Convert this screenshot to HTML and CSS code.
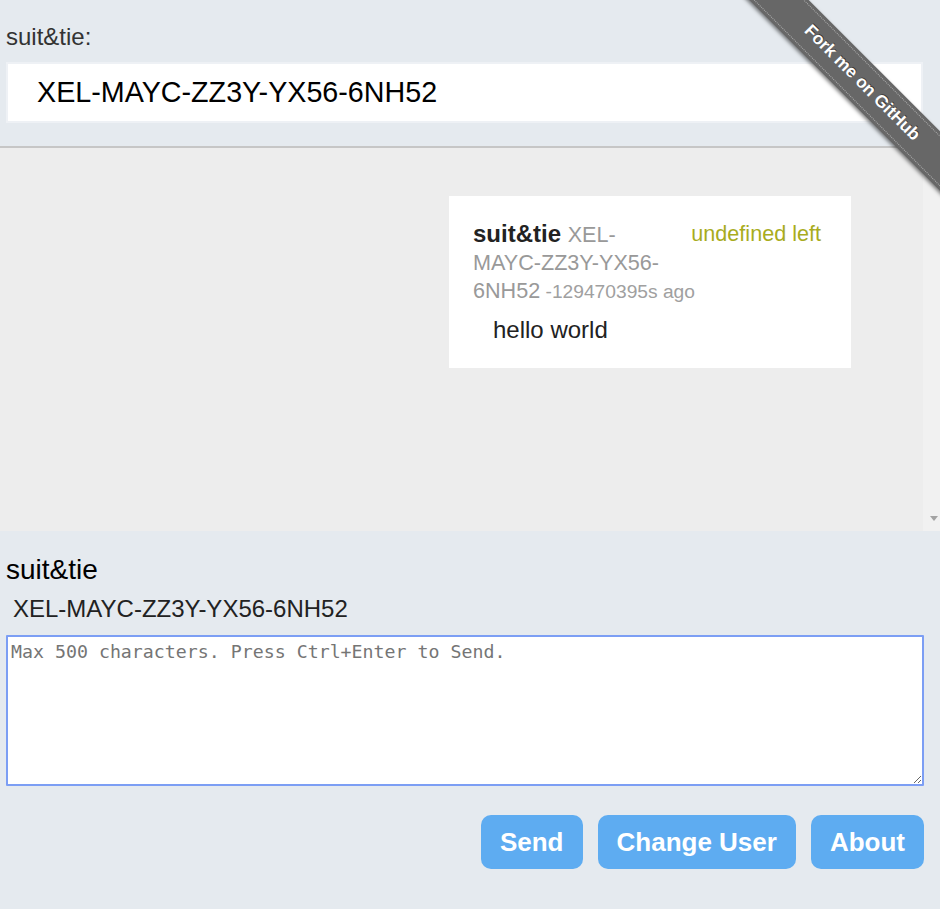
FILE: index.html
```html
<!DOCTYPE html>
<html lang="en">
<head>
<meta charset="utf-8">
<title>suit&amp;tie chat</title>
<link rel="stylesheet" href="styles.css">
</head>
<body>
<div class="page">
  <header class="top">
    <div class="label">suit&amp;tie:</div>
    <input class="id-input" type="text" value="XEL-MAYC-ZZ3Y-YX56-6NH52">
  </header>

  <section class="messages">
    <div class="list">
      <article class="card">
        <div class="card-head">
          <div class="who"><b class="name">suit&amp;tie</b> <span class="uid">XEL-MAYC-ZZ3Y-YX56-6NH52</span><span class="time">&nbsp;-129470395s ago</span></div>
          <div class="left">undefined left</div>
        </div>
        <p class="text">hello world</p>
      </article>
    </div>
    <div class="scrollbar"><span class="arrow"></span></div>
  </section>

  <section class="compose">
    <div class="me">suit&amp;tie</div>
    <div class="me-id">XEL-MAYC-ZZ3Y-YX56-6NH52</div>
    <textarea class="box" placeholder="Max 500 characters. Press Ctrl+Enter to Send."></textarea>
    <div class="actions">
      <button class="btn">Send</button>
      <button class="btn">Change User</button>
      <button class="btn">About</button>
    </div>
  </section>

  <a class="ribbon-wrap" href="#"><span class="ribbon"><span class="ribbon-text">Fork me on GitHub</span></span></a>
</div>
</body>
</html>
```
FILE: styles.css
```css
html, body {
  margin: 0;
  padding: 0;
}
body {
  background: #e5eaef;
  font-family: "Liberation Sans", Arial, sans-serif;
  color: #222;
}
.page {
  position: relative;
  min-height: 909px;
  overflow: hidden;
}

/* header */
.top {
  padding: 23px 17px 23px 6px;
}
.label {
  font-size: 24px;
  line-height: 28px;
  color: #333;
  margin: 0 0 11px 0;
}
.id-input {
  display: block;
  box-sizing: border-box;
  width: 100%;
  height: 61px;
  margin: 0;
  border: 2px solid #eef1f5;
  background: #fff;
  padding: 0 0 0 29px;
  font-family: "Liberation Sans", Arial, sans-serif;
  font-size: 28.7px;
  color: #000;
  outline: none;
}

/* messages */
.messages {
  display: flex;
  height: 383px;
  border-top: 2px solid #c6c6c6;
  background: #ededed;
}
.list {
  flex: 1;
  display: flex;
  justify-content: flex-end;
  align-items: flex-start;
  padding: 48px 72px 0 0;
}
.card {
  box-sizing: border-box;
  width: 402px;
  background: #fff;
  padding: 24px 30px 24px 24px;
  font-size: 24px;
  line-height: 28px;
}
.card-head {
  display: flex;
  justify-content: space-between;
  align-items: flex-start;
}
.who {
  width: 200px;
}
.name {
  font-weight: bold;
  color: #222;
}
.uid {
  font-size: 21.6px;
  line-height: 1;
  color: #999;
}
.time {
  font-size: 19.2px;
  line-height: 1;
  color: #a0a0a0;
  white-space: nowrap;
}
.left {
  font-size: 21.6px;
  color: #a8ac1d;
  white-space: nowrap;
}
.text {
  margin: 12px 0 0 20px;
  color: #222;
}
.scrollbar {
  width: 17px;
  background: #f1f1f1;
  display: flex;
  flex-direction: column;
  justify-content: flex-end;
  align-items: flex-start;
  padding: 0 0 10px 7px;
  box-sizing: border-box;
}
.arrow {
  width: 0;
  height: 0;
  border-left: 4.5px solid transparent;
  border-right: 4.5px solid transparent;
  border-top: 5px solid #a3a3a3;
}

/* compose */
.compose {
  padding: 23px 16px 0 6px;
}
.me {
  font-size: 28px;
  line-height: 32px;
  color: #000;
}
.me-id {
  font-size: 24px;
  line-height: 28px;
  color: #222;
  margin-top: 9px;
  padding-left: 7px;
}
.box {
  display: block;
  box-sizing: border-box;
  width: 100%;
  height: 151px;
  margin: 12px 0 0 0;
  border: 2px solid #7c9ef4;
  border-radius: 1px;
  background: #fff;
  padding: 4px 3px 2px 3px;
  font-family: "DejaVu Sans Mono", monospace;
  font-size: 18.25px;
  color: #222;
  outline: none;
}
.box::placeholder {
  color: #757575;
}
.actions {
  display: flex;
  justify-content: flex-end;
  gap: 15px;
  margin-top: 29px;
}
.btn {
  height: 54px;
  padding: 0 19px;
  border: none;
  border-radius: 10px;
  background: #5eacf1;
  color: #fff;
  font-family: "Liberation Sans", Arial, sans-serif;
  font-weight: bold;
  font-size: 26px;
  cursor: pointer;
}

/* github ribbon */
.ribbon-wrap {
  position: absolute;
  top: 0;
  right: 0;
  width: 200px;
  height: 200px;
  overflow: hidden;
  text-decoration: none;
}
.ribbon {
  position: absolute;
  left: -38px;
  top: 62px;
  width: 320px;
  height: 42px;
  box-sizing: border-box;
  padding: 3px 0;
  background: #676767;
  transform: rotate(45deg);
  box-shadow: 0 2px 4px rgba(0, 0, 0, 0.5);
}
.ribbon-text {
  display: block;
  height: 36px;
  box-sizing: border-box;
  padding: 3px 0;
  border-top: 1.4px dotted rgba(255, 255, 255, 0.45);
  border-bottom: 1.4px dotted rgba(255, 255, 255, 0.45);
  color: #fff;
  text-align: center;
  font-family: "Liberation Sans", Arial, sans-serif;
  font-weight: bold;
  font-size: 17.3px;
  line-height: 27px;
  text-shadow: 0 -1px rgba(0, 0, 0, 0.5);
}
```
